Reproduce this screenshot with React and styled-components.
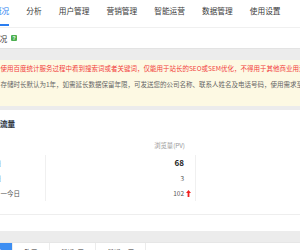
import React from "react";
import styled, { createGlobalStyle } from "styled-components";

const Global = createGlobalStyle`
  html, body { margin: 0; padding: 0; }
  body {
    background: #ececec;
    font-family: "Noto Sans CJK SC", "Noto Sans", sans-serif;
    width: 300px;
    height: 250px;
    overflow: hidden;
  }
`;

const Viewport = styled.div`
  width: 300px;
  height: 250px;
  overflow: hidden;
  background: #ececec;
`;

const Nav = styled.nav`
  display: flex;
  height: 28px;
  background: #fff;
  border-bottom: 1px solid #f0f0f0;
  box-sizing: border-box;
  margin-left: -14.6px;
  white-space: nowrap;
`;

const NavTab = styled.div`
  position: relative;
  padding: 6px 8.5px 0;
  font-size: 7.7px;
  line-height: 10px;
  color: ${(p) => (p.$active ? "#2b7ef0" : "#3a3a3a")};
  &::after {
    content: "";
    display: ${(p) => (p.$active ? "block" : "none")};
    position: absolute;
    left: 8.5px;
    right: 8.5px;
    bottom: 1.5px;
    height: 1.8px;
    background: #2b7ef0;
  }
`;

const SubHeader = styled.div`
  display: flex;
  align-items: center;
  gap: 4px;
  height: 21px;
  background: #fff;
  border-bottom: 1px solid #e3e3e3;
  box-sizing: border-box;
  margin-left: -22.7px;
`;

const SubTitle = styled.span`
  font-size: 7.5px;
  color: #333;
  white-space: nowrap;
`;

const Alert = styled.div`
  margin-top: 11px;
  background: #fdf9e3;
  padding: 0 0 14px 0.5px;
  white-space: nowrap;
  font-size: 6.5px;
  line-height: 16px;
`;

const AlertLine = styled.div`
  color: ${(p) => (p.$warn ? "#f23c3c" : "#666")};
`;

const Card = styled.section`
  margin-top: 4px;
  background: #fff;
`;

const CardBody = styled.div`
  padding-top: 8px;
  padding-bottom: 13px;
  border-bottom: 1px solid #eeeeee;
`;

const CardTitle = styled.div`
  display: flex;
  height: 12px;
  align-items: center;
`;

const TitleText = styled.span`
  font-size: 7.5px;
  font-weight: 700;
  color: #333;
  background: #cfe3fb;
  line-height: 8px;
`;

const Table = styled.div`
  display: grid;
  grid-template-columns: 45px 151px;
  margin-top: 5px;
`;

const HeadCell = styled.div`
  height: 20px;
  display: flex;
  align-items: center;
  justify-content: ${(p) => (p.$right ? "flex-end" : "flex-start")};
  padding-right: ${(p) => (p.$right ? "11px" : "0")};
  font-size: 6.3px;
  color: #999;
  white-space: nowrap;
`;

const LabelCell = styled.div`
  height: 15.3px;
  display: flex;
  align-items: center;
  font-size: 6.5px;
  color: #555;
  white-space: nowrap;
`;

const Label = styled.span`
  margin-left: ${(p) => p.$shift || 0}px;
  color: ${(p) => p.$color || "#555"};
`;

const ValueCell = styled.div`
  height: 15.3px;
  display: flex;
  align-items: center;
  justify-content: flex-end;
  padding-right: 11px;
  border-left: 1px solid #f0f0f0;
  border-right: 1px solid #f0f0f0;
  font-size: ${(p) => (p.$big ? "8px" : "6.5px")};
  font-weight: ${(p) => (p.$big ? 700 : 400)};
  color: ${(p) => (p.$big ? "#222" : "#555")};
`;

const Arrow = styled.svg`
  width: 5px;
  height: 7px;
  margin-left: 2px;
  margin-right: -7px;
`;

const CardFooter = styled.div`
  height: 16px;
`;

const Tabs = styled.div`
  display: flex;
  margin-top: 11px;
  height: 18px;
  background: #fff;
  border-top: 1px solid #e6e6e6;
  margin-left: -23px;
  white-space: nowrap;
`;

const Tab = styled.div`
  display: flex;
  align-items: center;
  padding: 0 11.2px;
  font-size: 6.5px;
  color: ${(p) => (p.$active ? "#fff" : "#333")};
  background: ${(p) => (p.$active ? "#3d8ef2" : "#fff")};
  border-right: 1px solid #ececec;
`;

const HelpIcon = () => (
  <svg width="6" height="6" viewBox="0 0 6 6">
    <rect x="0" y="0" width="6" height="6" rx="1" fill="#4caf50" />
    <text x="3" y="4.9" fontSize="5" textAnchor="middle" fill="#fff" fontFamily="Liberation Sans, sans-serif" fontWeight="700">?</text>
  </svg>
);

const navItems = ["概况", "分析", "用户管理", "营销管理", "智能运营", "数据管理", "使用设置"];

const rows = [
  { label: "今日", shift: -11.7, value: "68", big: true, color: "#5b6f95" },
  { label: "昨日", shift: -11.7, value: "3", color: "#5b6f95" },
  { label: "一今日", shift: 0.5, value: "102", up: true },
];

export default function App() {
  return (
    <Viewport>
      <Global />
      <Nav>
        {navItems.map((n, i) => (
          <NavTab key={n} $active={i === 0}>{n}</NavTab>
        ))}
      </Nav>
      <SubHeader>
        <SubTitle>网站概况</SubTitle>
        <HelpIcon />
      </SubHeader>
      <Alert>
        <AlertLine $warn>使用百度统计服务过程中看到搜索词或者关键词，仅能用于站长的SEO或SEM优化，不得用于其他商业用途</AlertLine>
        <AlertLine>存储时长默认为1年，如需延长数据保留年限，可发送您的公司名称、联系人姓名及电话号码，使用需求至邮箱</AlertLine>
      </Alert>
      <Card>
        <CardBody>
          <CardTitle>
            <TitleText>流量</TitleText>
          </CardTitle>
          <Table>
            <HeadCell />
            <HeadCell $right>浏览量(PV)</HeadCell>
            {rows.map((r) => (
              <React.Fragment key={r.label}>
                <LabelCell>
                  <Label $shift={r.shift} $color={r.color}>{r.label}</Label>
                </LabelCell>
                <ValueCell $big={r.big}>
                  {r.value}
                  {r.up && (
                    <Arrow viewBox="0 0 5 7">
                      <path d="M2.5 0 L5 3 L3.4 3 L3.4 7 L1.6 7 L1.6 3 L0 3 Z" fill="#f02020" />
                    </Arrow>
                  )}
                </ValueCell>
              </React.Fragment>
            ))}
          </Table>
        </CardBody>
        <CardFooter />
      </Card>
      <Tabs>
        <Tab $active>今天</Tab>
        <Tab>昨天</Tab>
        <Tab>最近7天</Tab>
        <Tab>最近30天</Tab>
      </Tabs>
    </Viewport>
  );
}
